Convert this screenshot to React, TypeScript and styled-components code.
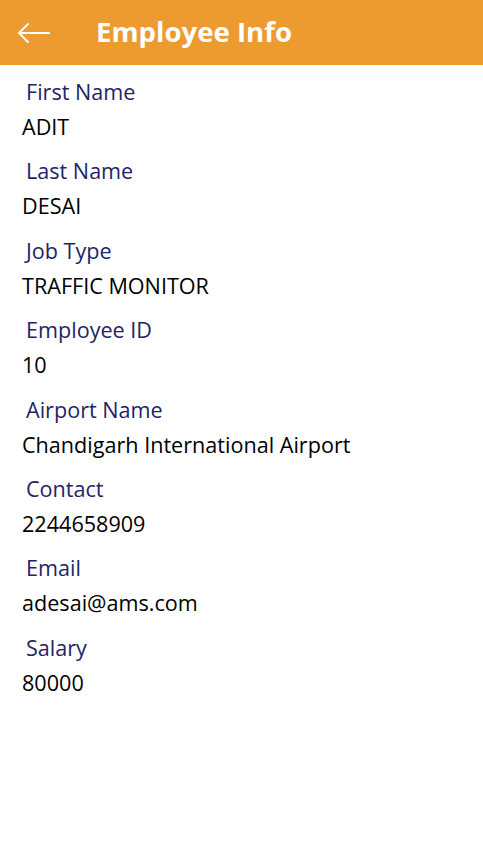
import styled, { createGlobalStyle } from 'styled-components';

const GlobalStyle = createGlobalStyle`
  body {
    margin: 0;
    background: #ffffff;
    font-family: 'Open Sans', 'Noto Sans', sans-serif;
  }
`;

const fields = [
  { label: 'First Name', value: 'ADIT' },
  { label: 'Last Name', value: 'DESAI' },
  { label: 'Job Type', value: 'TRAFFIC MONITOR' },
  { label: 'Employee ID', value: '10' },
  { label: 'Airport Name', value: 'Chandigarh International Airport' },
  { label: 'Contact', value: '2244658909' },
  { label: 'Email', value: 'adesai@ams.com' },
  { label: 'Salary', value: '80000' },
];

export default function App() {
  return (
    <Screen>
      <GlobalStyle />
      <Header>
        <BackButton aria-label="Back">
          <svg width="34" height="22" viewBox="0 0 34 22" fill="none">
            <path d="M33 11H2M11.5 1.5L2 11l9.5 9.5" stroke="#ffffff" strokeWidth="2" />
          </svg>
        </BackButton>
        <Title>Employee Info</Title>
      </Header>

      <Form>
        {fields.map((f) => (
          <Field key={f.label}>
            <Label>{f.label}</Label>
            <Value>{f.value}</Value>
          </Field>
        ))}
      </Form>
    </Screen>
  );
}

const Screen = styled.div`
  width: 483px;
  min-height: 867px;
  background: #ffffff;
`;

const Header = styled.header`
  height: 65px;
  background: #ed9a31;
  display: flex;
  align-items: center;
`;

const BackButton = styled.button`
  border: none;
  background: transparent;
  padding: 0;
  margin-left: 17px;
  width: 34px;
  height: 22px;
  display: flex;
  cursor: pointer;
`;

const Title = styled.h1`
  margin: 0 0 0 45px;
  font-size: 27.6px;
  font-weight: 700;
  color: #ffffff;
  line-height: 1;
  padding-bottom: 2px;
`;

const Form = styled.main`
  display: flex;
  flex-direction: column;
  padding-top: 12px;
`;

const Field = styled.div`
  display: flex;
  flex-direction: column;
  gap: 5px;
  margin-bottom: 14.4px;
`;

const Label = styled.div`
  padding-left: 26px;
  font-size: 21.6px;
  line-height: 30px;
  color: #1f2466;
`;

const Value = styled.div`
  padding-left: 22px;
  font-size: 21.6px;
  line-height: 30px;
  color: #000000;
`;
